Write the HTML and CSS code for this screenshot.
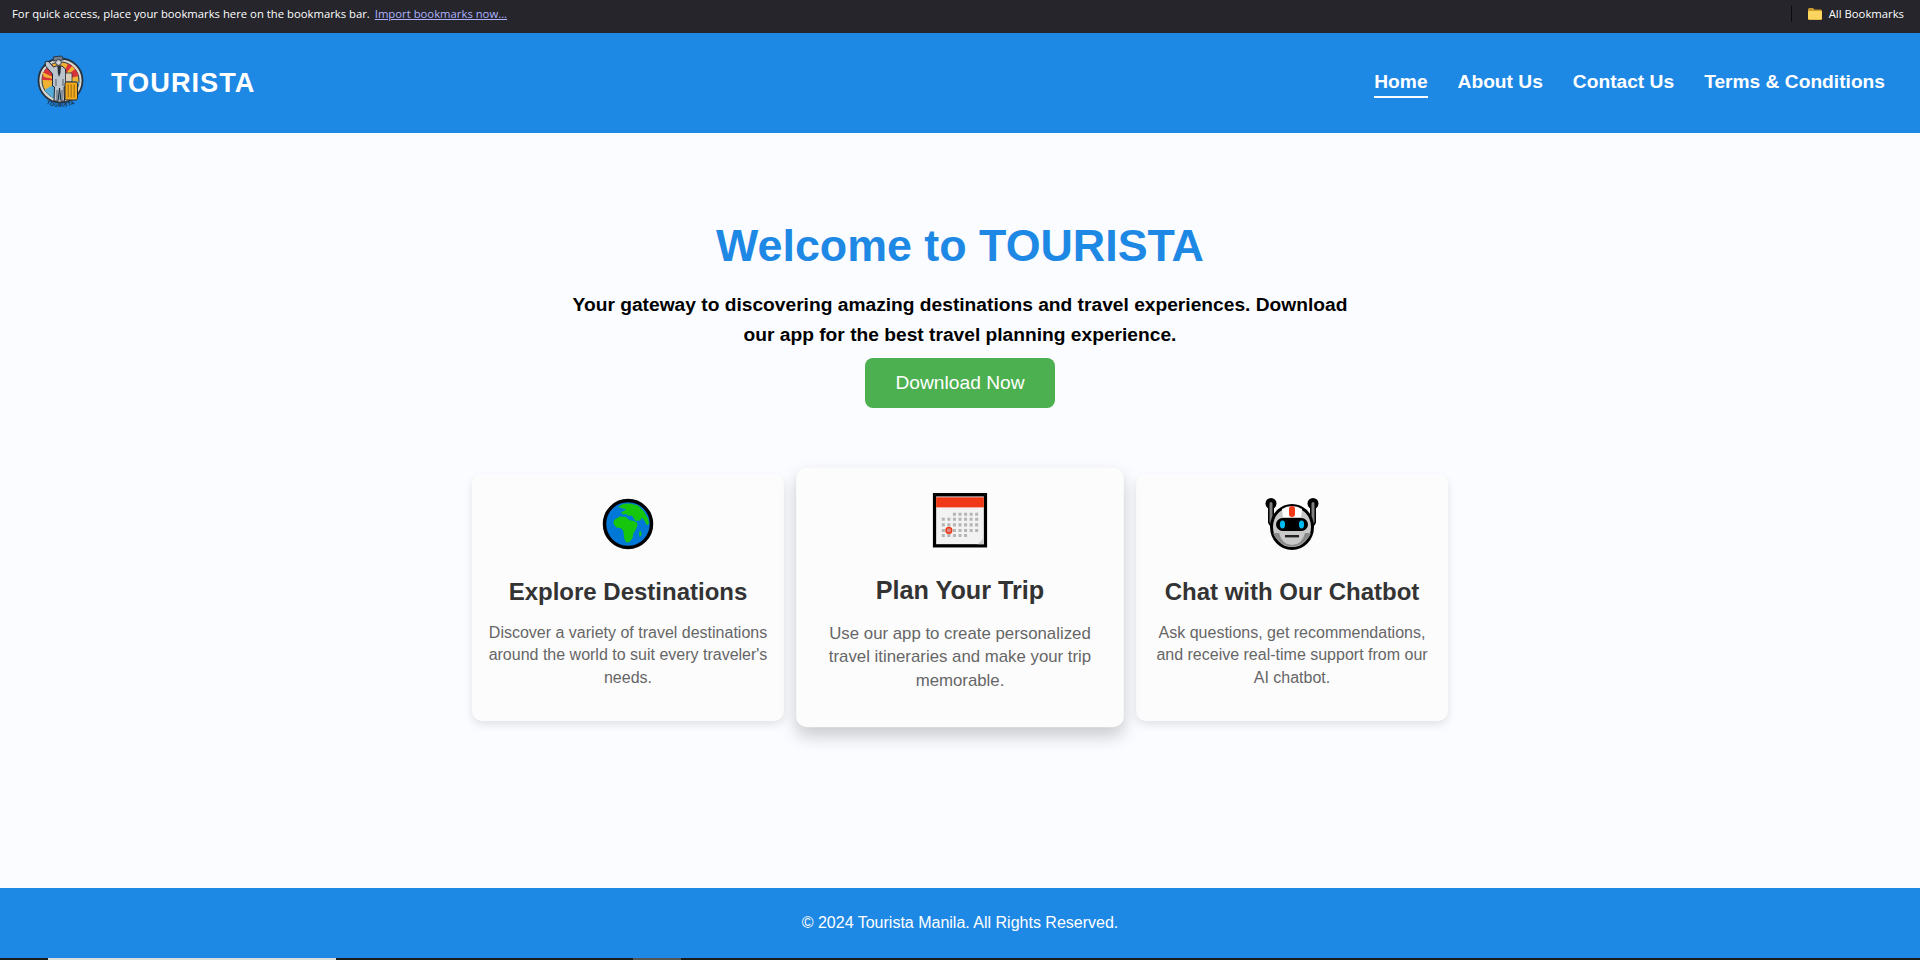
FILE: index.html
```html
<!DOCTYPE html>
<html lang="en">
<head>
  <meta charset="UTF-8" />
  <title>Tourista</title>
  <link rel="stylesheet" href="styles.css">
</head>
<body>
  <div class="bookmarks-bar">
    <p class="bookmarks-hint">For quick access, place your bookmarks here on the bookmarks bar. <a href="#">Import bookmarks now...</a></p>
    <div class="all-bookmarks">
      <svg class="folder" viewBox="0 0 16 14" width="16" height="14">
        <path d="M1 2.500a1.500 1.500 0 0 1 1.500-1.500h3.500l1.500 1.500h6a1.500 1.500 0 0 1 1.500 1.500v7.500a1.500 1.500 0 0 1-1.500 1.500h-11a1.500 1.500 0 0 1-1.500-1.500z" fill="#c99a2e"/>
        <path d="M1 5a1 1 0 0 1 1-1h12a1 1 0 0 1 1 1v6.500a1 1 0 0 1-1 1h-12a1 1 0 0 1-1-1z" fill="#fcd55f"/>
      </svg>
      <span>All Bookmarks</span>
    </div>
  </div>

  <header class="site-header">
    <div class="brand">
      <svg class="logo" viewBox="0 0 50 56" width="50" height="56">
        <defs>
          <path id="logo-arc" d="M8 47 Q25 57 44 47"/>
        </defs>
        <circle cx="25.500" cy="25.500" r="22" fill="#d9d8d0" stroke="#26323f" stroke-width="1.800"/>
        <circle cx="25.500" cy="25.500" r="18.500" fill="#f0b232" stroke="#26323f" stroke-width="1"/>
        <path d="M25.500 25.500 L7 25 A18.500 18.500 0 0 1 17 9z" fill="#d8343a"/>
        <path d="M25.500 25.500 L33 8.600 A18.500 18.500 0 0 1 43.500 21z" fill="#d8343a"/>
        <path d="M25.500 25.500 L7 17 L9 22z M25.500 25.500 L12 12 L15 10z M25.500 25.500 L37 11 L40 14z" fill="#f0b232"/>
        <path d="M25.500 25.500 L9.500 35 A18.500 18.500 0 0 0 25.500 44z" fill="#56acd9"/>
        <path d="M25.500 25.500 L44 27 A18.500 18.500 0 0 1 38 39z" fill="#56acd9"/>
        <path d="M18.500 1.800 L27 1 L28.500 5 L18 6z" fill="#6f7c89" stroke="#1f2935" stroke-width=".8"/>
        <circle cx="23.500" cy="7.500" r="2.800" fill="#cfd3d9" stroke="#1f2935" stroke-width=".8"/>
        <path d="M10 7 L13 6 L18.500 12 L21 11 H27 L30.500 14 L31 32 L29 32 L29.500 46 H26 L24.500 33 L23 46 H19 L19.500 32 L17.500 31 L17.500 19 L10.500 11z" fill="#bcc4cd" stroke="#1f2935" stroke-width="1"/>
        <path d="M22.500 11 H26 L25.500 18 L24 22 L22.800 18z" fill="#25303c"/>
        <path d="M21 24 V31 M28 24 V31 M22 35 V45 M27 35 V45" stroke="#4f5b68" stroke-width="1"/>
        <rect x="30.500" y="18" width="6.500" height="9" rx="1" fill="#d9cdbb" stroke="#1f2935" stroke-width=".7"/>
        <rect x="30" y="27" width="12.500" height="18" rx="1.500" fill="#f2aa1e" stroke="#1f2935" stroke-width="1"/>
        <path d="M33.200 29.500 V42.500 M36.200 29.500 V42.500 M39.200 29.500 V42.500" stroke="#9c6a10" stroke-width="1"/>
        <text class="logo-name"><textPath href="#logo-arc" startOffset="50%" text-anchor="middle">TOURISTA</textPath></text>
      </svg>
      <span class="brand-name">TOURISTA</span>
    </div>
    <nav class="main-nav">
      <a class="active" href="#">Home</a>
      <a href="#">About Us</a>
      <a href="#">Contact Us</a>
      <a href="#">Terms &amp; Conditions</a>
    </nav>
  </header>

  <main class="content">
    <section class="hero">
      <h1>Welcome to TOURISTA</h1>
      <p>Your gateway to discovering amazing destinations and travel experiences. Download our app for the best travel planning experience.</p>
      <a class="download-btn" href="#">Download Now</a>
    </section>

    <section class="features">
      <article class="card">
        <svg class="card-icon" viewBox="0 0 54 54" width="54" height="54">
          <circle cx="27" cy="27" r="23.500" fill="#0078d7" stroke="#000" stroke-width="3.500"/>
          <path d="M17 10 l5-3 l7-.5 l8 2 l6 6 l4 7 l1 5 l-2 2 l-2-4 l-3-4 l-2 3 l-4 .5 l-2-2 l-2-3.500 l-3 .5 l-3-2 l-3 .5 l-2-2.500 l3-1 l2-2 l-3-.5z" fill="#16c60c"/>
          <path d="M13 23 l6-3.500 l6 .5 l3 3 l5 1 l3 1.500 l.5 3 l-2 4.500 l-2 3 l-1 5 l-3 4 l-3.500.5 l-2-5 l-.5-6 l-2-3 l-5-1 l-3-3.500z" fill="#16c60c"/>
          <path d="M38 35 l2-1 l.5 4 l-2 2z" fill="#16c60c"/>
        </svg>
        <h3>Explore Destinations</h3>
        <p>Discover a variety of travel destinations around the world to suit every traveler's needs.</p>
      </article>

      <article class="card card-hover">
        <svg class="card-icon calendar" viewBox="0 0 54 54" width="52" height="52">
          <rect x="1.700" y="1.700" width="50.600" height="50.600" fill="#f2f2f2" stroke="#000" stroke-width="3.400"/>
          <rect x="3.400" y="4.200" width="47.200" height="10" fill="#f03a17"/>
          <path class="cal-dots" d="M20 21h3M25.500 21h3M31 21h3M36.500 21h3M42 21h3M9 26h3M14.500 26h3M20 26h3M25.500 26h3M31 26h3M36.500 26h3M42 26h3M9 31.500h3M14.500 31.500h3M20 31.500h3M25.500 31.500h3M31 31.500h3M36.500 31.500h3M42 31.500h3M9 37h3M20 37h3M25.500 37h3M31 37h3M36.500 37h3M42 37h3M9 42h3M14.500 42h3M20 42h3M25.500 42h3M31 42h3"/>
          <circle cx="16" cy="37" r="2.800" fill="#d88" stroke="#f03a17" stroke-width="1.500"/>
          <path d="M50.600 44.500 V50.600 H44.500z" fill="#ccc"/>
        </svg>
        <h3>Plan Your Trip</h3>
        <p>Use our app to create personalized travel itineraries and make your trip memorable.</p>
      </article>

      <article class="card">
        <svg class="card-icon" viewBox="0 0 54 54" width="54" height="54">
          <path d="M6 7 v18 l4 6 M48 7 v18 l-4 6" fill="none" stroke="#000" stroke-width="6" stroke-linejoin="round"/>
          <circle cx="6" cy="6.500" r="5.500" fill="#000"/>
          <circle cx="48" cy="6.500" r="5.500" fill="#000"/>
          <path d="M6 6.500 v18 M48 6.500 v18" stroke="#808080" stroke-width="3" stroke-linecap="round"/>
          <ellipse cx="27" cy="30" rx="20.500" ry="21.500" fill="#c8c8c8" stroke="#000" stroke-width="3"/>
          <path d="M8 36 a20.500 21.500 0 0 0 38 0 l-6 0 q-3 12-13 12 t-13-12z" fill="#8a8a8a"/>
          <path d="M17 12 a19.500 21.500 0 0 1 20 0 l-1 8 h-18z" fill="#fff"/>
          <rect x="24" y="9" width="6" height="11" rx="3" fill="#f03a17"/>
          <rect x="11" y="21" width="32" height="13" rx="6.500" fill="#000"/>
          <ellipse cx="17.500" cy="27.500" rx="2.600" ry="4" fill="#00bcf2"/>
          <ellipse cx="36.500" cy="27.500" rx="2.600" ry="4" fill="#00bcf2"/>
          <rect x="20" y="38" width="14" height="2.400" fill="#222"/>
        </svg>
        <h3>Chat with Our Chatbot</h3>
        <p>Ask questions, get recommendations, and receive real-time support from our AI chatbot.</p>
      </article>
    </section>
  </main>

  <footer class="site-footer">
    <p>&copy; 2024 Tourista Manila. All Rights Reserved.</p>
  </footer>

  <div class="task-strip">
    <span class="strip-light"></span>
    <span class="strip-gray"></span>
  </div>
</body>
</html>
```

FILE: styles.css
```css
html, body {
  margin: 0;
  height: 100%;
  overflow: hidden;
}
body {
  display: flex;
  flex-direction: column;
  font-family: "Liberation Sans", Arial, sans-serif;
  background: #fbfcff;
  color: #000;
}

/* browser bookmarks bar */
.bookmarks-bar {
  height: 33px;
  flex: none;
  display: flex;
  align-items: center;
  justify-content: space-between;
  padding: 0 16px 6px 12px;
  box-sizing: border-box;
  background: #25252b;
  color: #fff;
  font-family: "Open Sans", sans-serif;
  font-size: 11.300px;
}
.bookmarks-hint {
  margin: 0;
}
.bookmarks-hint a {
  margin-left: 2px;
  color: #aeb4ff;
}
.all-bookmarks {
  display: flex;
  align-items: center;
  gap: 6px;
  height: 16px;
  padding-left: 15px;
  border-left: 1px solid #0d0d0f;
}

.site-header {
  height: 100px;
  flex: none;
  display: flex;
  align-items: center;
  justify-content: space-between;
  padding: 0 35px;
  background: #1e88e5;
  color: #fff;
}
.brand {
  display: flex;
  align-items: center;
  gap: 26px;
}
.logo-name {
  font-size: 5px;
  font-weight: bold;
  letter-spacing: .6px;
  fill: #1c2430;
}
.brand-name {
  font-size: 27.200px;
  font-weight: bold;
  letter-spacing: 1px;
}
.main-nav {
  display: flex;
  gap: 30px;
  padding-top: 3px;
}
.main-nav a {
  color: #fff;
  text-decoration: none;
  font-size: 19.200px;
  font-weight: bold;
  padding-bottom: 3px;
  border-bottom: 2px solid transparent;
}
.main-nav a.active {
  border-bottom-color: #fff;
}

.content {
  flex: 1;
  padding-top: 87px;
}
.hero {
  text-align: center;
}
.hero h1 {
  margin: 0 0 20px;
  color: #1e88e5;
  font-size: 44.800px;
  line-height: 50px;
}
.hero p {
  width: 800px;
  margin: 0 auto 8px;
  font-size: 19.200px;
  font-weight: bold;
  line-height: 30px;
}
.download-btn {
  display: inline-block;
  padding: 14px 30px;
  border-radius: 8px;
  background: #4caf50;
  color: #fff;
  font-size: 19.200px;
  text-decoration: none;
}

.features {
  display: flex;
  justify-content: center;
  gap: 20px;
  margin-top: 66px;
}
.card {
  width: 312px;
  height: 247px;
  padding: 20px 15px;
  box-sizing: border-box;
  border-radius: 10px;
  background: #fcfcfd;
  text-align: center;
  box-shadow: 0 4px 8px rgba(0, 0, 0, 0.1);
}
.card-hover {
  transform: scale(1.05);
  box-shadow: 0 8px 16px rgba(0, 0, 0, 0.2);
}
.card-icon {
  display: block;
  margin: 3px auto 0;
}
.card-icon.calendar {
  margin: 4px auto 1px;
}
.card h3 {
  margin: 27px 0 0;
  color: #333;
  font-size: 24px;
}
.card p {
  margin: 16px 0 0;
  color: #666;
  font-size: 16px;
  line-height: 22.400px;
}
.cal-dots {
  stroke: #b5b5b5;
  stroke-width: 3;
}

.site-footer {
  height: 70px;
  flex: none;
  display: flex;
  align-items: center;
  justify-content: center;
  background: #1e88e5;
  color: #fff;
  font-size: 16px;
}
.site-footer p {
  margin: 0;
}

.task-strip {
  height: 2px;
  flex: none;
  display: flex;
  background: #1a1a1a;
}
.strip-light {
  width: 288px;
  margin-left: 48px;
  background: #dcdcdc;
}
.strip-gray {
  width: 48px;
  margin-left: 297px;
  background: #555;
}
```
